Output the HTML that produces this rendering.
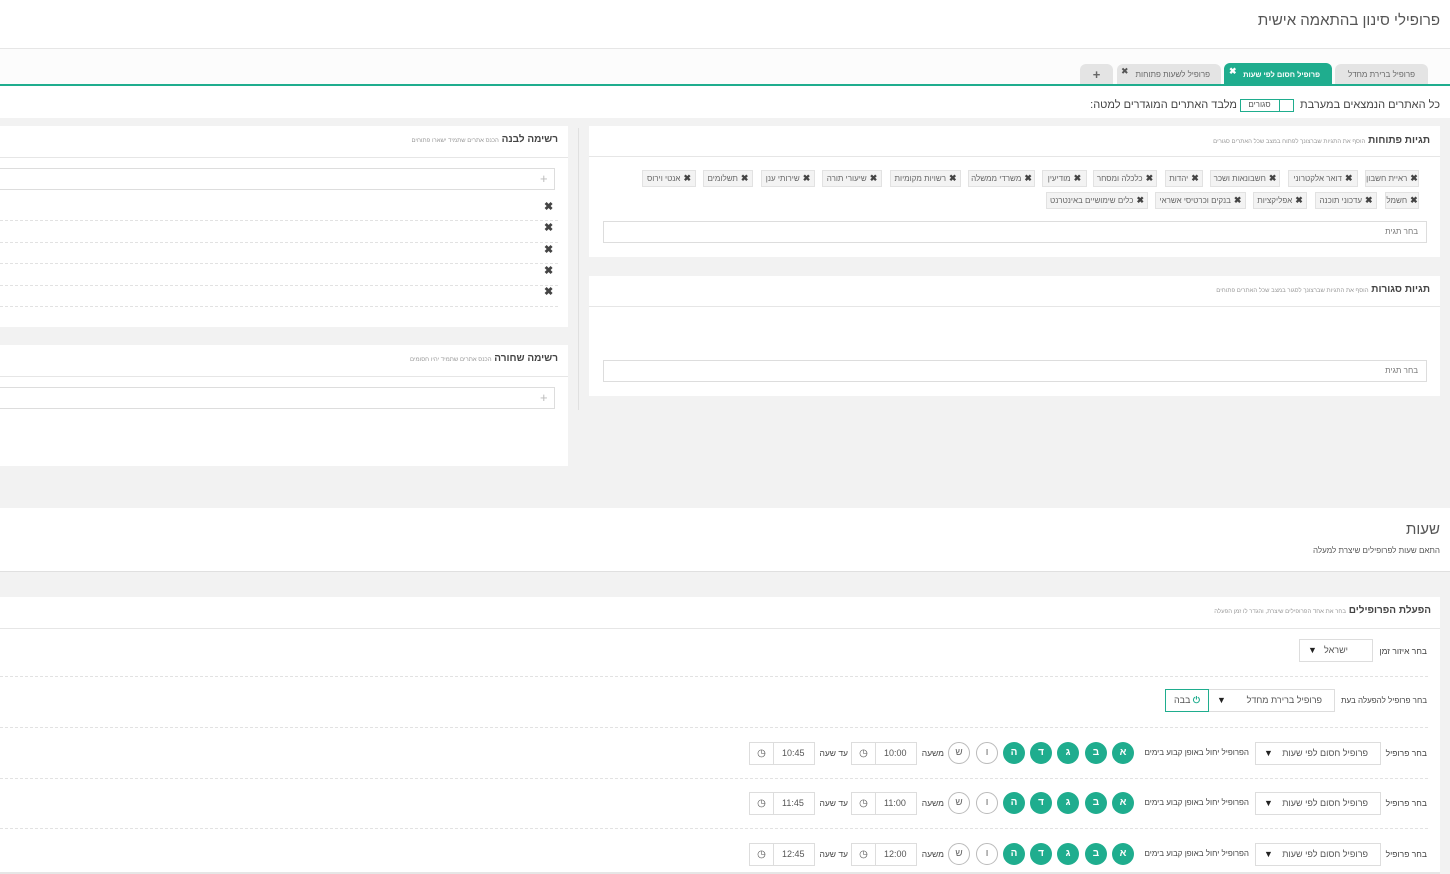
<!DOCTYPE html>
<html><head><meta charset="utf-8">
<style>
*{box-sizing:border-box;margin:0;padding:0}
body{width:1450px;height:874px;overflow:hidden;position:relative;background:#fff;font-family:"Liberation Sans","Noto Sans CJK JP",sans-serif;color:#555}
.a{position:absolute}
.t{position:absolute;white-space:nowrap;direction:rtl}
.panel{position:absolute;background:#fff}
.tag{position:absolute;height:17px;background:#f3f3f3;border:1px solid #e2e2e2;font-size:8px;color:#666;line-height:15px;text-align:center;direction:rtl;white-space:nowrap}
.tag b{color:#444;font-size:9px;margin-left:3px}
.inp{position:absolute;border:1px solid #ddd;background:#fff}
.x{position:absolute;font-size:11px;color:#444;font-weight:bold}
.dash{position:absolute;border-top:1px dashed #e2e2e2;height:0}
.c{position:absolute;width:22px;height:22px;border-radius:50%;font-size:10px;font-weight:bold;text-align:center;line-height:22px}
.g{background:#1fad8e;color:#fff}
.o{border:1px solid #bbb;color:#666;line-height:20px;font-weight:normal}
.sel{position:absolute;height:23px;border:1px solid #ddd;background:#fff;font-size:9px;color:#555;direction:rtl;line-height:21px;padding-right:12px}
.sel i{position:absolute;left:8px;top:0;font-style:normal;font-size:9px;color:#222}
.time{position:absolute;height:23px;width:66px;border:1px solid #ddd;background:#fff;font-size:9px;color:#555}
.time span{position:absolute;left:0;top:0;width:24px;height:21px;border-right:1px solid #ddd;text-align:center;line-height:21px;font-size:10px}
.time em{position:absolute;left:32px;top:0;line-height:21px;font-style:normal}
.lbl{position:absolute;font-size:8.5px;color:#444;direction:rtl;white-space:nowrap}
</style></head><body>
<div class="t" style="right:10px;top:12px;font-size:15px;color:#555">פרופילי סינון בהתאמה אישית</div>
<div class="a" style="left:0;top:48px;width:1450px;height:1px;background:#e6e6e6"></div>
<div class="a" style="left:0;top:49px;width:1450px;height:36px;background:#fcfcfc"></div>
<!-- tabs -->
<div class="a" style="left:1335px;top:64px;width:93px;height:21px;background:#e4e4e4;border-radius:6px 6px 0 0"></div>
<div class="t" style="right:35px;top:70px;font-size:8px;color:#666">פרופיל ברירת מחדל</div>
<div class="a" style="left:1224px;top:63px;width:108px;height:22px;background:#1fad8e;border-radius:6px 6px 0 0"></div>
<div class="t" style="right:130px;top:70px;font-size:7.5px;color:#fff;font-weight:bold">פרופיל חסום לפי שעות</div>
<div class="a" style="left:1229px;top:66px;font-size:9px;color:#fff;font-weight:bold">✖</div>
<div class="a" style="left:1117px;top:64px;width:104px;height:21px;background:#e4e4e4;border-radius:6px 6px 0 0"></div>
<div class="t" style="right:240px;top:70px;font-size:8px;color:#666">פרופיל לשעות פתוחות</div>
<div class="a" style="left:1121px;top:66px;font-size:9px;color:#555">✖</div>
<div class="a" style="left:1080px;top:64px;width:33px;height:21px;background:#e4e4e4;border-radius:6px 6px 0 0;text-align:center;font-size:13px;font-weight:bold;color:#666;line-height:21px">+</div>
<div class="a" style="left:0;top:84px;width:1450px;height:2px;background:#1fad8e"></div>
<!-- line -->
<div class="t" style="right:10px;top:99px;font-size:11px;color:#444">כל האתרים הנמצאים במערבת</div>
<div class="a" style="left:1240px;top:99px;width:54px;height:13px;border:1px solid #1fad8e;background:#fff"></div>
<div class="a" style="left:1240px;top:99px;width:40px;height:13px;border-right:1px solid #1fad8e;font-size:8px;color:#555;text-align:center;line-height:11px">סגורים</div>
<div class="t" style="right:213px;top:99px;font-size:11px;color:#444">מלבד האתרים המוגדרים למטה:</div>
<!-- gray band -->
<div class="a" style="left:0;top:118px;width:1450px;height:390px;background:#f2f2f2"></div>
<div class="a" style="left:578px;top:128px;width:1px;height:282px;background:#e0e0e0"></div>
<!-- open tags panel -->
<div class="panel" style="left:589px;top:126px;width:851px;height:131px"></div>
<div class="a" style="left:589px;top:156px;width:851px;height:1px;background:#e6e6e6"></div>
<div class="t" style="right:20px;top:135px;font-size:10px;color:#444;font-weight:bold">תגיות פתוחות <span style="font-size:6px;color:#999;font-weight:normal">הוסף את התגיות שברצונך לפתוח במצב שכל האתרים סגורים</span></div>
<div class="tag" style="left:1365px;top:170px;width:54px"><b>✖</b>ראיית חשבון</div>
<div class="tag" style="left:1288px;top:170px;width:70px"><b>✖</b>דואר אלקטרוני</div>
<div class="tag" style="left:1210px;top:170px;width:70px"><b>✖</b>חשבונאות ושכר</div>
<div class="tag" style="left:1165px;top:170px;width:38px"><b>✖</b>יהדות</div>
<div class="tag" style="left:1093px;top:170px;width:64px"><b>✖</b>כלכלה ומסחר</div>
<div class="tag" style="left:1042px;top:170px;width:45px"><b>✖</b>מודיעין</div>
<div class="tag" style="left:968px;top:170px;width:67px"><b>✖</b>משרדי ממשלה</div>
<div class="tag" style="left:890px;top:170px;width:71px"><b>✖</b>רשויות מקומיות</div>
<div class="tag" style="left:822px;top:170px;width:60px"><b>✖</b>שיעורי תורה</div>
<div class="tag" style="left:761px;top:170px;width:54px"><b>✖</b>שירותי ענן</div>
<div class="tag" style="left:703px;top:170px;width:50px"><b>✖</b>תשלומים</div>
<div class="tag" style="left:642px;top:170px;width:54px"><b>✖</b>אנטי וירוס</div>
<div class="tag" style="left:1385px;top:192px;width:34px"><b>✖</b>חשמל</div>
<div class="tag" style="left:1315px;top:192px;width:62px"><b>✖</b>עדכוני תוכנה</div>
<div class="tag" style="left:1253px;top:192px;width:54px"><b>✖</b>אפליקציות</div>
<div class="tag" style="left:1155px;top:192px;width:91px"><b>✖</b>בנקים וכרטיסי אשראי</div>
<div class="tag" style="left:1046px;top:192px;width:102px"><b>✖</b>כלים שימושיים באינטרנט</div>
<div class="inp" style="left:603px;top:221px;width:824px;height:22px"></div>
<div class="t" style="right:32px;top:227px;font-size:8px;color:#777">בחר תגית</div>
<!-- closed tags panel -->
<div class="panel" style="left:589px;top:276px;width:851px;height:120px"></div>
<div class="a" style="left:589px;top:306px;width:851px;height:1px;background:#e6e6e6"></div>
<div class="t" style="right:20px;top:284px;font-size:10px;color:#444;font-weight:bold">תגיות סגורות <span style="font-size:6px;color:#999;font-weight:normal">הוסף את התגיות שברצונך לסגור במצב שכל האתרים פתוחים</span></div>
<div class="inp" style="left:603px;top:360px;width:824px;height:22px"></div>
<div class="t" style="right:32px;top:366px;font-size:8px;color:#777">בחר תגית</div>
<!-- white list -->
<div class="panel" style="left:0;top:126px;width:568px;height:201px"></div>
<div class="a" style="left:0;top:157px;width:568px;height:1px;background:#e6e6e6"></div>
<div class="t" style="right:892px;top:134px;font-size:10px;color:#444;font-weight:bold">רשימה לבנה <span style="font-size:6px;color:#999;font-weight:normal">הכנס אתרים שתמיד ישארו פתוחים</span></div>
<div class="inp" style="left:-2px;top:168px;width:557px;height:22px"></div>
<div class="a" style="left:540px;top:171px;font-size:13px;color:#bbb">+</div>
<div class="x" style="left:544px;top:200px">✖</div>
<div class="dash" style="left:0;top:220px;width:558px"></div>
<div class="x" style="left:544px;top:221px">✖</div>
<div class="dash" style="left:0;top:242px;width:558px"></div>
<div class="x" style="left:544px;top:243px">✖</div>
<div class="dash" style="left:0;top:263px;width:558px"></div>
<div class="x" style="left:544px;top:264px">✖</div>
<div class="dash" style="left:0;top:285px;width:558px"></div>
<div class="x" style="left:544px;top:285px">✖</div>
<div class="dash" style="left:0;top:306px;width:558px"></div>
<!-- black list -->
<div class="panel" style="left:0;top:345px;width:568px;height:121px"></div>
<div class="a" style="left:0;top:376px;width:568px;height:1px;background:#e6e6e6"></div>
<div class="t" style="right:892px;top:353px;font-size:10px;color:#444;font-weight:bold">רשימה שחורה <span style="font-size:6px;color:#999;font-weight:normal">הכנס אתרים שתמיד יהיו חסומים</span></div>
<div class="inp" style="left:-2px;top:387px;width:557px;height:22px"></div>
<div class="a" style="left:540px;top:390px;font-size:13px;color:#bbb">+</div>
<!-- hours -->
<div class="t" style="right:10px;top:521px;font-size:15px;color:#555">שעות</div>
<div class="t" style="right:10px;top:546px;font-size:8px;color:#555">התאם שעות לפרופילים שיצרת למעלה</div>
<div class="a" style="left:0;top:571px;width:1450px;height:1px;background:#e0e0e0"></div>
<div class="a" style="left:0;top:572px;width:1450px;height:302px;background:#f2f2f2"></div>
<div class="panel" style="left:0;top:597px;width:1440px;height:277px"></div>
<div class="a" style="left:0;top:628px;width:1440px;height:1px;background:#e6e6e6"></div>
<div class="t" style="right:19px;top:605px;font-size:10px;color:#444;font-weight:bold">הפעלת הפרופילים <span style="font-size:6px;color:#999;font-weight:normal">בחר את אחד הפרופילים שיצרת, והגדר לו זמן הפעלה</span></div>
<div class="lbl" style="right:23px;top:646px">בחר איזור זמן</div>
<div class="sel" style="left:1299px;top:639px;width:74px;padding-right:24px">ישראל<i>▼</i></div>
<div class="dash" style="left:0;top:676px;width:1428px"></div>
<div class="lbl" style="right:23px;top:696px;font-size:8px">בחר פרופיל להפעלה בעת</div>
<div class="sel" style="left:1208px;top:689px;width:127px;padding-right:12px">פרופיל ברירת מחדל<i>▼</i></div>
<div class="a" style="left:1165px;top:689px;width:44px;height:23px;border:1px solid #1fad8e;background:#fff;font-size:9px;color:#555;text-align:center;line-height:21px;direction:rtl"><span style="color:#1fad8e;font-weight:bold">⏻</span> בבה</div>
<div class="dash" style="left:0;top:727px;width:1428px"></div>
<div class="dash" style="left:0;top:778px;width:1428px"></div>
<div class="dash" style="left:0;top:828px;width:1428px"></div>
<div class="a" style="left:0;top:872px;width:1440px;height:2px;background:#e6e6e6"></div>

<!-- rows -->
<div id="rows"></div>
<script>
var ys=[753,803,854],times=[["10:00","10:45"],["11:00","11:45"],["12:00","12:45"]],h="";
var days=[["א",1123,1],["ב",1096,1],["ג",1068,1],["ד",1041,1],["ה",1014,1],["ו",987,0],["ש",959,0]];
ys.forEach(function(y,i){
h+='<div class="lbl" style="right:23px;top:'+(y-5)+'px">בחר פרופיל</div>';
h+='<div class="sel" style="left:1255px;top:'+(y-11)+'px;width:126px">פרופיל חסום לפי שעות<i>▼</i></div>';
h+='<div class="lbl" style="right:201px;top:'+(y-5)+'px;font-size:8px">הפרופיל יחול באופן קבוע בימים</div>';
days.forEach(function(d){h+='<div class="c '+(d[2]?'g':'o')+'" style="left:'+(d[1]-11)+'px;top:'+(y-11)+'px">'+d[0]+'</div>';});
h+='<div class="lbl" style="right:506px;top:'+(y-5)+'px">משעה</div>';
h+='<div class="time" style="left:851px;top:'+(y-11)+'px"><span>◷</span><em>'+times[i][0]+'</em></div>';
h+='<div class="lbl" style="right:602px;top:'+(y-5)+'px">עד שעה</div>';
h+='<div class="time" style="left:749px;top:'+(y-11)+'px"><span>◷</span><em>'+times[i][1]+'</em></div>';
});
document.getElementById('rows').innerHTML=h;
</script>
</body></html>
